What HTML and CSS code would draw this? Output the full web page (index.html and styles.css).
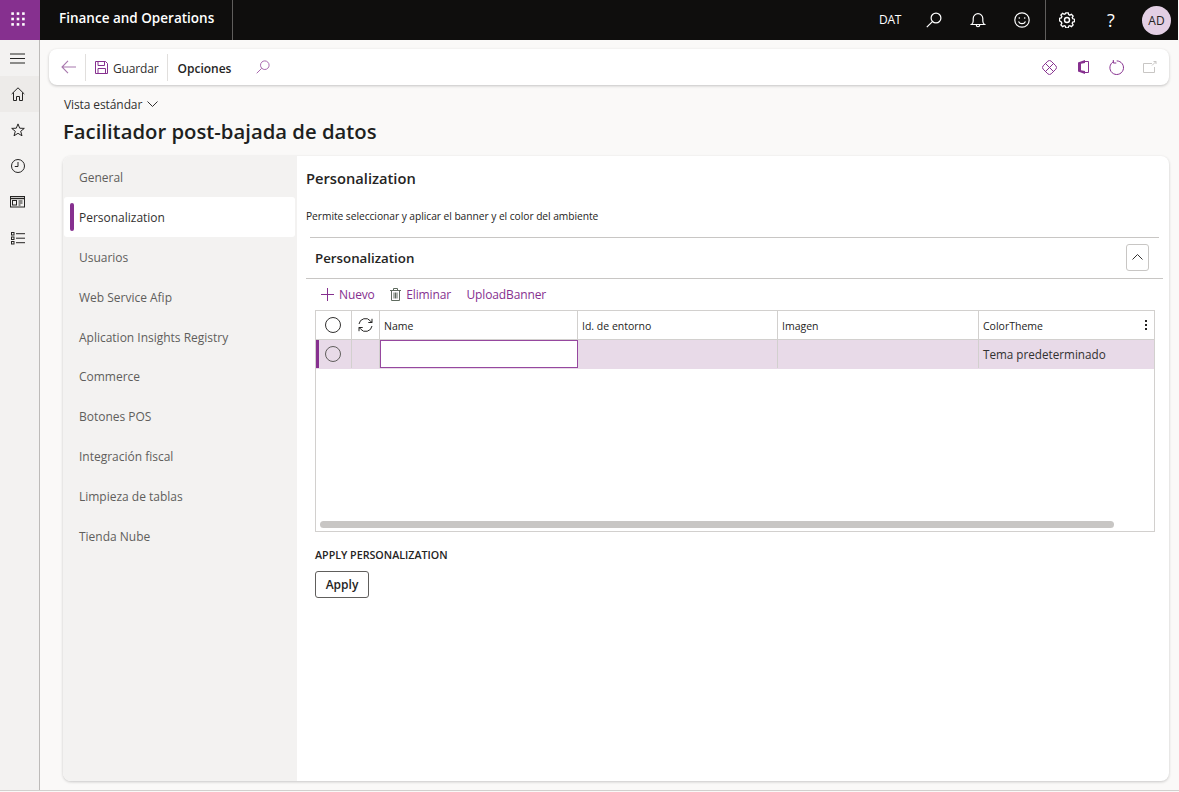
FILE: index.html
```html
<!DOCTYPE html>
<html lang="es">
<head>
  <meta charset="UTF-8" />
  <title>Facilitador post-bajada de datos</title>
  <link rel="stylesheet" href="styles.css">
</head>
<body>
<header class="topbar">
  <div class="waffle">
    <svg width="14" height="14" viewBox="0 0 14 14" fill="#fff"><rect x=".3" y=".3" width="2.600" height="2.600"/><rect x="5.700" y=".3" width="2.600" height="2.600"/><rect x="11.100" y=".3" width="2.600" height="2.600"/><rect x=".3" y="5.700" width="2.600" height="2.600"/><rect x="5.700" y="5.700" width="2.600" height="2.600"/><rect x="11.100" y="5.700" width="2.600" height="2.600"/><rect x=".3" y="11.100" width="2.600" height="2.600"/><rect x="5.700" y="11.100" width="2.600" height="2.600"/><rect x="11.100" y="11.100" width="2.600" height="2.600"/></svg>
  </div>
  <div class="app-name">Finance and Operations</div>
  <div class="top-right">
    <span class="company">DAT</span>
    <span class="top-icon"><svg width="16" height="16" viewBox="0 0 16 16" fill="none" stroke="#fff" stroke-width="1.2"><circle cx="10" cy="6" r="4.9"/><path d="M6.4 9.6L.8 15.2"/></svg></span>
    <span class="top-icon"><svg width="16" height="16" viewBox="0 0 16 16" fill="none" stroke="#fff" stroke-width="1.2"><path d="M1.5 12.5c1.4-.8 1.7-2 1.7-3.5V6.500a4.800 4.800 0 0 1 9.600 0V9c0 1.500.3 2.700 1.700 3.500z"/><path d="M6.300 13c.1 2.300 3.300 2.300 3.400 0"/></svg></span>
    <span class="top-icon"><svg width="16" height="16" viewBox="0 0 16 16" fill="none" stroke="#fff" stroke-width="1.2"><circle cx="8" cy="8" r="7.200"/><circle cx="5.300" cy="6" r=".8" fill="#fff" stroke="none"/><circle cx="10.700" cy="6" r=".8" fill="#fff" stroke="none"/><path d="M4.500 9.500c1.500 2.900 5.500 2.900 7 0"/></svg></span>
    <span class="top-sep"></span>
    <span class="top-icon"><svg width="16" height="16" viewBox="0 0 16 16" fill="none" stroke="#fff" stroke-width="1.400"><path d="M6.700 1h2.600l.4 1.900 1.300.6 1.700-1 1.800 1.900-1 1.600.6 1.300 1.900.5v2.600l-1.900.4-.6 1.300 1 1.700-1.800 1.800-1.700-1-1.300.6-.4 1.900H6.700l-.4-1.900-1.300-.6-1.700 1-1.800-1.800 1-1.700-.6-1.300L0 9.400V6.800l1.900-.5.6-1.300-1-1.600 1.800-1.900 1.700 1 1.300-.6z" transform="translate(.5 -.1) scale(.94)"/><circle cx="8" cy="8" r="2.500"/></svg></span>
    <span class="top-icon help">?</span>
    <span class="avatar">AD</span>
  </div>
</header>

<div class="shell">
  <aside class="rail">
    <div class="rail-item"><svg width="15" height="11" viewBox="0 0 15 11" stroke="#252423" stroke-width="1.100"><path d="M0 1h15M0 5.500h15M0 10h15"/></svg></div>
    <div class="rail-item is-home"><svg width="14" height="14" viewBox="0 0 14 14" fill="none" stroke="#252423" stroke-width="1"><path d="M.7 7L7 .8 13.300 7M2.500 5.500v8h3v-4h3v4h3v-8"/></svg></div>
    <div class="rail-item"><svg width="14" height="14" viewBox="0 0 14 14" fill="none" stroke="#252423" stroke-width="1"><path d="M7 .9l1.700 4.300 4.600.2-3.600 2.900 1.300 4.500L7 10.300l-4 2.500 1.300-4.500L.7 5.400l4.600-.2z"/></svg></div>
    <div class="rail-item"><svg width="14" height="14" viewBox="0 0 14 14" fill="none" stroke="#252423" stroke-width="1"><circle cx="7" cy="7" r="6.500"/><path d="M7 3v4.500H3.800"/></svg></div>
    <div class="rail-item"><svg width="15" height="12" viewBox="0 0 15 12" fill="none" stroke="#252423" stroke-width="1"><rect x=".5" y=".5" width="14" height="10.500"/><path d="M.5 2.500h14" stroke-width="1.400"/><rect x="2.500" y="4.500" width="4" height="4.500"/><path d="M8.500 5h4M8.500 7h4M8.500 9h2"/></svg></div>
    <div class="rail-item"><svg width="14" height="13" viewBox="0 0 14 13" fill="none" stroke="#252423" stroke-width="1"><rect x=".5" y=".5" width="2.500" height="2.500"/><rect x=".5" y="5" width="2.500" height="2.500"/><rect x=".5" y="9.500" width="2.500" height="2.500"/><path d="M5 1.700h9M5 6.200h9M5 10.700h9"/></svg></div>
  </aside>

  <main class="page">
    <div class="toolbar">
      <button class="tool-back"><svg width="15" height="14" viewBox="0 0 15 14" fill="none" stroke="#a878ae" stroke-width="1.100"><path d="M7 .8L1 7l6 6.200M1 7h14"/></svg></button>
      <span class="tool-sep"></span>
      <button class="tool-btn"><svg width="13" height="13" viewBox="0 0 13 13" fill="none" stroke="#86308f" stroke-width="1"><path d="M.5.500h10l2 2v10H.5z"/><path d="M3 .500v4h6.500v-4M3 12.500V7.500h7.500v5"/></svg><span>Guardar</span></button>
      <span class="tool-sep"></span>
      <button class="tool-btn is-strong"><span>Opciones</span></button>
      <button class="tool-find"><svg width="14" height="14" viewBox="0 0 14 14" fill="none" stroke="#a868ae" stroke-width="1"><circle cx="8.800" cy="5.200" r="4.300"/><path d="M5.700 8.300L.7 13.300"/></svg></button>
      <div class="tool-right">
        <span class="tool-slot"><svg width="15" height="15" viewBox="0 0 15 15" fill="none" stroke="#86308f" stroke-width="1" stroke-linejoin="round"><path d="M5.800 1.200a2.400 2.400 0 0 1 3.400 0l4.600 4.600a2.400 2.400 0 0 1 0 3.400l-4.600 4.600a2.400 2.400 0 0 1-3.400 0L1.200 9.200a2.400 2.400 0 0 1 0-3.400zM4 4l7 7M11 4l-7 7"/></svg></span>
        <span class="tool-slot"><svg width="11" height="14" viewBox="0 0 11 14"><path d="M0 2.500L7 0v14L0 11.500z" fill="#86308f"/><path d="M3 3.800L7 3v8l-4-.8z" fill="#fff"/><path d="M7 1.500h3.500v11H7" fill="none" stroke="#86308f"/></svg></span>
        <span class="tool-slot"><svg width="15" height="15" viewBox="0 0 15 15" fill="none" stroke="#86308f" stroke-width="1"><path d="M4.700 1.600a6.800 6.800 0 1 0 3-.7"/><path d="M4.300 0v3h3"/></svg></span>
        <span class="tool-slot"><svg width="14" height="12" viewBox="0 0 14 12" fill="none" stroke="#c8c6c4" stroke-width="1"><path d="M9 2.500H.5v9h11V6"/><path d="M9 4.500L13 .5M10.500.5H13V3"/></svg></span>
      </div>
    </div>

    <div class="view-name">Vista estándar <svg width="11" height="6" viewBox="0 0 11 6" fill="none" stroke="#323130" stroke-width="1"><path d="M.5.500l5 5 5-5"/></svg></div>
    <h1 class="page-title">Facilitador post-bajada de datos</h1>

    <section class="card">
      <nav class="side-nav">
        <a class="nav-item">General</a>
        <a class="nav-item is-active">Personalization</a>
        <a class="nav-item">Usuarios</a>
        <a class="nav-item">Web Service Afip</a>
        <a class="nav-item">Aplication Insights Registry</a>
        <a class="nav-item">Commerce</a>
        <a class="nav-item">Botones POS</a>
        <a class="nav-item">Integración fiscal</a>
        <a class="nav-item">Limpieza de tablas</a>
        <a class="nav-item">Tienda Nube</a>
      </nav>

      <div class="content">
        <h2 class="content-title">Personalization</h2>
        <p class="content-desc">Permite seleccionar y aplicar el banner y el color del ambiente</p>

        <div class="section-head">
          <h3>Personalization</h3>
          <button class="collapse"><svg width="11" height="6" viewBox="0 0 11 6" fill="none" stroke="#323130" stroke-width="1"><path d="M.5 5.500l5-5 5 5"/></svg></button>
        </div>

        <div class="section-body">
          <div class="actions">
            <button class="action"><svg width="13" height="13" viewBox="0 0 13 13" stroke="#86308f" stroke-width="1"><path d="M6.500 0v13M0 6.500h13"/></svg>Nuevo</button>
            <button class="action"><svg width="11" height="13" viewBox="0 0 11 13" fill="none" stroke="#5f6b5f" stroke-width="1"><path d="M0 2.500h11M3.500 2.500V.5h4v2M1.500 2.500v10h8v-10M4 4.500v6M5.500 4.500v6M7 4.500v6"/></svg>Eliminar</button>
            <button class="action">UploadBanner</button>
          </div>

          <div class="grid">
            <div class="grid-row grid-head">
              <div class="cell"><span class="radio"></span></div>
              <div class="cell"><svg width="15" height="14" viewBox="0 0 15 14" fill="none" stroke="#252423" stroke-width="1"><path d="M1 6a6.500 6.500 0 0 1 11.500-3l1.500 1.500M14 .8v3.700h-3.700M14 8a6.500 6.500 0 0 1-11.500 3L1 9.500M1 13.200V9.500h3.700"/></svg></div>
              <div class="cell">Name</div>
              <div class="cell">Id. de entorno</div>
              <div class="cell">Imagen</div>
              <div class="cell">ColorTheme<span class="more"></span></div>
            </div>
            <div class="grid-row grid-sel">
              <div class="cell"><span class="radio"></span></div>
              <div class="cell"></div>
              <div class="cell is-edit"></div>
              <div class="cell"></div>
              <div class="cell"></div>
              <div class="cell">Tema predeterminado</div>
            </div>
            <div class="grid-fill"><div class="scroll-thumb"></div></div>
          </div>

          <h4 class="apply-label">APPLY PERSONALIZATION</h4>
          <button class="apply">Apply</button>
        </div>
      </div>
    </section>
  </main>
</div>
</body>
</html>
```

FILE: styles.css
```css
* {
  box-sizing: border-box;
}
html, body {
  height: 100%;
}
body {
  margin: 0;
  height: 792px;
  overflow: hidden;
  font-family: "Open Sans", "Noto Sans", sans-serif;
  color: #252423;
  background: #faf9f8;
}
button {
  font-family: inherit;
  background: none;
  border: none;
  padding: 0;
  color: inherit;
}
.topbar {
  height: 40px;
  margin-right: 1px;
  background: #0f0e0d;
  display: flex;
  align-items: center;
  color: #fff;
}
.waffle {
  width: 40px;
  height: 40px;
  background: #86308f;
  display: flex;
  align-items: center;
  justify-content: center;
  padding: 0 5px 3px 0;
}
.app-name {
  width: 193px;
  height: 40px;
  line-height: 36px;
  padding-left: 19px;
  font-size: 13.500px;
  font-weight: 600;
  border-right: 1px solid #605e5c;
}
.top-right {
  margin-left: auto;
  display: flex;
  align-items: center;
  height: 40px;
}
.company {
  font-size: 12px;
  margin-right: 20px;
  margin-bottom: 1px;
  letter-spacing: -0.3px;
}
.top-icon {
  width: 44px;
  height: 40px;
  display: flex;
  align-items: center;
  justify-content: center;
}
.top-icon:nth-child(2) { margin-left: -9px; }
.help {
  font-size: 18px;
  font-weight: 400;
}
.top-sep {
  width: 1px;
  height: 40px;
  margin: 0 -1px 0 1px;
  background: #605e5c;
}
.avatar {
  width: 29px;
  height: 29px;
  border-radius: 50%;
  background: #e3cfe4;
  color: #252423;
  font-size: 12px;
  text-align: center;
  line-height: 29px;
  margin: 0 7px 0 9px;
}
.shell {
  display: flex;
  height: 751px;
  border-bottom: 1px solid #d2d0ce;
}
.rail {
  width: 40px;
  background: #f3f2f1;
  border-right: 1px solid #bdbbb9;
  flex-shrink: 0;
}
.rail-item {
  height: 36px;
  display: flex;
  align-items: center;
  justify-content: center;
  padding-right: 4px;
}
.rail-item.is-home {
  background: #edebe9;
}
.page {
  flex: 1;
  padding: 9px 10px 0 9px;
  background: #faf9f8;
  min-width: 0;
}
.toolbar {
  height: 36px;
  background: #fff;
  border-radius: 8px;
  box-shadow: 0 1px 3px rgba(0,0,0,0.22);
  display: flex;
  align-items: center;
  font-size: 12px;
}
.tool-back {
  width: 36px;
  display: flex;
  justify-content: center;
  padding-left: 2px;
}
.tool-sep {
  width: 1px;
  height: 27px;
  background: #e1dfdd;
}
.tool-btn {
  display: flex;
  align-items: center;
  gap: 5px;
  font-size: 12px;
  color: #323130;
  padding: 0 8px 0 9px;
  letter-spacing: -0.15px;
}
.tool-btn span {
  position: relative;
  top: 1px;
}
.tool-btn.is-strong {
  font-weight: 600;
  color: #252423;
  padding-left: 10px;
  letter-spacing: 0;
}
.tool-find {
  margin-left: 17px;
  display: flex;
}
.tool-right {
  margin-left: auto;
  display: flex;
  align-items: center;
  padding-right: 3px;
}
.tool-slot {
  width: 33px;
  display: flex;
  justify-content: center;
}
.tool-slot:first-child {
  padding-right: 2px;
}
.view-name {
  margin: 11px 0 0 15px;
  font-size: 12px;
  line-height: 18px;
  color: #323130;
  letter-spacing: -0.1px;
}
.view-name svg {
  margin-left: 2px;
  vertical-align: 2px;
}
.page-title {
  margin: 3px 0 0 14px;
  font-size: 20.300px;
  line-height: 28px;
  font-weight: 600;
  color: #201f1e;
}
.card {
  margin: 11px 0 0 14px;
  height: 625px;
  background: #fff;
  border-radius: 8px;
  box-shadow: 0 1px 3px rgba(0,0,0,0.2);
  display: flex;
  overflow: hidden;
}
.side-nav {
  width: 234px;
  background: #f3f2f1;
  padding: 1.300px 2px 0 1px;
  flex-shrink: 0;
}
.nav-item {
  display: flex;
  align-items: center;
  height: 39.85px;
  padding-left: 15px;
  padding-top: 1px;
  font-size: 12px;
  color: #605e5c;
  border-radius: 3px;
  position: relative;
  letter-spacing: -0.01px;
}
.nav-item.is-active {
  background: #fff;
  color: #323130;
}
.nav-item.is-active::before {
  content: "";
  position: absolute;
  left: 6px;
  top: 6px;
  bottom: 6px;
  width: 4px;
  border-radius: 2px;
  background: #86308f;
}
.content {
  flex: 1;
  min-width: 0;
  padding: 0 6px 0 9px;
}
.content-title {
  margin: 12px 0 0;
  font-size: 14.700px;
  line-height: 20px;
  font-weight: 600;
  color: #252423;
}
.content-desc {
  margin: 21px 0 0;
  font-size: 10.250px;
  line-height: 14px;
  color: #252423;
  letter-spacing: -0.05px;
}
.section-head {
  margin: 14px 0 0;
  height: 42px;
  display: flex;
  align-items: center;
  justify-content: space-between;
  padding: 0 14px 0 9px;
  border-bottom: 1px solid #c8c6c4;
  position: relative;
}
.section-head::before {
  content: "";
  position: absolute;
  top: 0;
  left: 4px;
  right: 4px;
  border-top: 1px solid #c8c6c4;
}
.section-head h3 {
  margin: 0;
  font-size: 13.300px;
  font-weight: 600;
  color: #252423;
}
.collapse {
  width: 23px;
  height: 27px;
  border: 1px solid #c8c6c4;
  border-radius: 3px;
  display: flex;
  align-items: center;
  justify-content: center;
  margin-top: -1px;
}
.section-body {
  padding: 0 8px 0 9px;
}
.actions {
  height: 31px;
  display: flex;
  align-items: center;
  gap: 15.500px;
  padding-left: 6px;
}
.action {
  display: flex;
  align-items: center;
  gap: 5px;
  font-size: 12px;
  color: #86308f;
  letter-spacing: -0.13px;
}
.grid {
  border: 1px solid #d2d0ce;
  height: 222px;
  display: flex;
  flex-direction: column;
  width: 840px;
}
.grid-row {
  display: grid;
  grid-template-columns: 36px 28px 198px 200px 201px 1fr;
  flex-shrink: 0;
}
.grid-head {
  height: 29px;
  font-size: 10.500px;
  font-weight: 500;
  color: #252423;
  border-bottom: 1px solid #d2d0ce;
}
.grid-head .cell:nth-child(n+3) {
  padding-top: 2px;
}
.grid-sel {
  height: 29px;
  font-size: 11.700px;
  background: #e8dae8;
  color: #323130;
  border-bottom: 1px solid #e8dae8;
  box-shadow: inset 3px 0 0 #86308f;
}
.cell {
  display: flex;
  align-items: center;
  padding-left: 4px;
  border-right: 1px solid #d2d0ce;
  position: relative;
}
.cell:last-child {
  border-right: none;
}
.cell:nth-child(1), .cell:nth-child(2) {
  justify-content: center;
  padding-left: 0;
}
.cell:nth-child(1) {
  padding-right: 1px;
}
.cell.is-edit {
  background: #fff;
  border: 1px solid #96489f;
}
.radio {
  width: 16px;
  height: 16px;
  border: 1px solid #323130;
  border-radius: 50%;
  display: block;
}
.grid-sel .radio {
  border-color: #605e5c;
}
.more {
  position: absolute;
  right: 7px;
  top: 9px;
  width: 2px;
  height: 2px;
  background: #252423;
  box-shadow: 0 4px 0 #252423, 0 8px 0 #252423;
}
.grid-fill {
  flex: 1;
  display: flex;
  align-items: flex-end;
  padding: 0 40px 3px 4px;
}
.scroll-thumb {
  flex: 1;
  height: 7px;
  border-radius: 4px;
  background: #c8c6c4;
}
.apply-label {
  margin: 16px 0 0;
  font-size: 10.700px;
  line-height: 14px;
  font-weight: 600;
  color: #252423;
}
.apply {
  display: block;
  margin-top: 9px;
  width: 54px;
  height: 27px;
  border: 1px solid #605e5c;
  border-radius: 3px;
  font-size: 12px;
  font-weight: 600;
  color: #252423;
  background: #fff;
}
```
